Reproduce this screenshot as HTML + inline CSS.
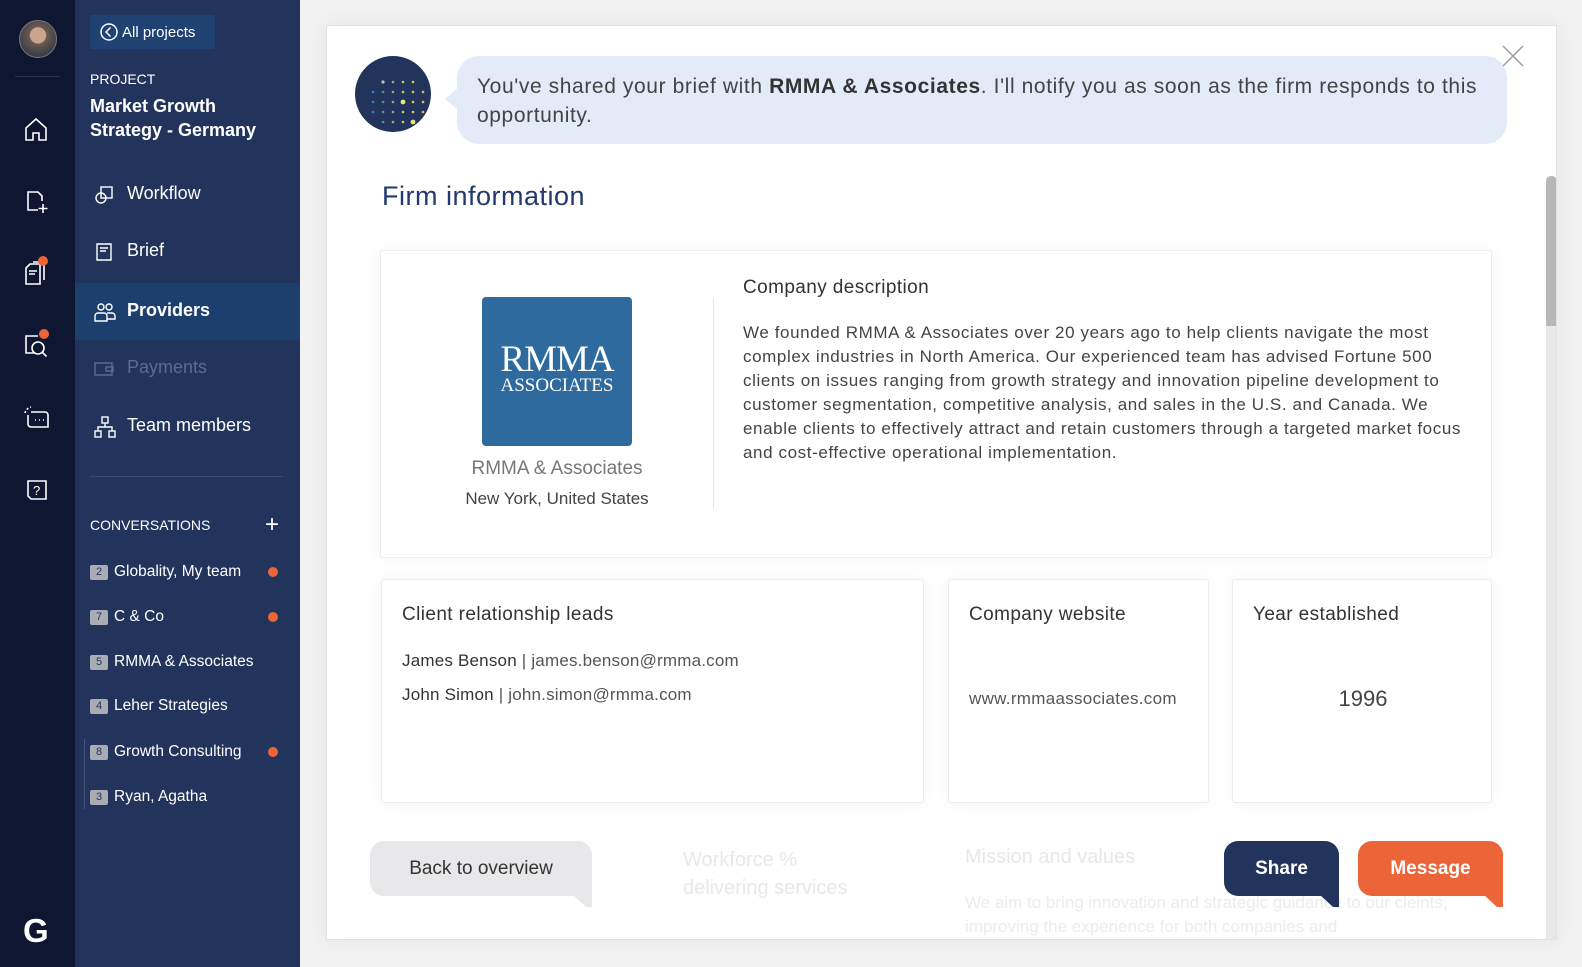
<!DOCTYPE html>
<html><head><meta charset="utf-8"><style>
*{margin:0;padding:0;box-sizing:border-box}
body{width:1582px;height:967px;overflow:hidden;background:#f2f2f2;font-family:"Liberation Sans",sans-serif;position:relative}
.abs{position:absolute}
#rail{left:0;top:0;width:75px;height:967px;background:#0f1631}
#panel{left:75px;top:0;width:225px;height:967px;background:#22335c;color:#fff}
.nav{position:absolute;left:0;width:225px;height:57px;display:flex;align-items:center;font-size:18px;color:#fff}
.nav svg{position:absolute;left:18px}
.nav span{position:absolute;left:52px;top:17px}
.conv{position:absolute;left:15px;font-size:15.5px;color:#fff;display:flex;align-items:center}
.badge{width:18px;height:15px;background:#a9acb5;color:#22335c;font-size:11px;text-align:center;line-height:15px;border-radius:2px;margin-right:6px}
.dot{position:absolute;left:193px;width:10px;height:10px;border-radius:50%;background:#ec6538}
.card{position:absolute;background:#fff;border:1px solid #ececec;border-radius:3px;box-shadow:0 0 18px rgba(0,0,0,0.04)}
.ct{position:absolute;font-size:19px;color:#333;letter-spacing:.4px}
</style></head><body>
<div id="rail" class="abs">
 <div class="abs" style="left:19px;top:20px;width:38px;height:38px;border-radius:50%;background:radial-gradient(circle at 50% 40%,#c9a58e 0 28%,#6d5a52 30%,#3a3f4a 70%);border:1px solid #777"></div>
 <div class="abs" style="left:15px;top:76px;width:45px;height:1px;background:#2a3352"></div>
 <svg class="abs" style="left:24px;top:116px" width="24" height="26" viewBox="0 0 24 26" fill="none" stroke="#fff" stroke-width="1.6"><path d="M2 12L12 3l10 9v12h-7v-7H9v7H2z"/></svg>
 <svg class="abs" style="left:24px;top:189px" width="26" height="26" viewBox="0 0 26 26" fill="none" stroke="#fff" stroke-width="1.6"><path d="M14 21H4V3h10l4 4v5"/><path d="M19 15v9M14.5 19.5h9"/></svg>
 <svg class="abs" style="left:24px;top:258px" width="26" height="28" viewBox="0 0 26 28" fill="none" stroke="#fff" stroke-width="1.6"><path d="M6 6h10v20H2V10z"/><path d="M9 4h11v18"/><path d="M5 13h8M5 16h6"/></svg>
 <div class="abs" style="left:38px;top:256px;width:10px;height:10px;border-radius:50%;background:#ec6538"></div>
 <svg class="abs" style="left:23px;top:331px" width="28" height="30" viewBox="0 0 28 30" fill="none" stroke="#fff" stroke-width="1.6"><path d="M12 22H3V5h12"/><circle cx="15" cy="17" r="6"/><path d="M19.5 21.5l4 4"/></svg>
 <div class="abs" style="left:39px;top:329px;width:10px;height:10px;border-radius:50%;background:#ec6538"></div>
 <svg class="abs" style="left:23px;top:405px" width="28" height="26" viewBox="0 0 28 26" fill="none" stroke="#fff" stroke-width="1.6"><path d="M8 7h14a3 3 0 0 1 3 3v12H8a3 3 0 0 1-3-3v-9"/><path d="M2 8a8 8 0 0 1 6-6" stroke-dasharray="2 2"/><path d="M12 15h1M16 15h1M20 15h1"/></svg>
 <svg class="abs" style="left:25px;top:478px" width="24" height="24" viewBox="0 0 24 24" fill="none" stroke="#fff" stroke-width="1.6"><path d="M3 3h18v18H6l-3-3z"/><text x="8" y="17" font-size="13" fill="#fff" stroke="none" font-family="Liberation Sans">?</text></svg>
 <div class="abs" style="left:23px;top:912px;font-size:33px;font-weight:bold;color:#fff">G</div>
</div>
<div id="panel" class="abs">
 <div class="abs" style="left:15px;top:15px;width:125px;height:34px;background:#1f4272;border-radius:2px;font-size:15px;display:flex;align-items:center">
  <svg style="margin-left:9px;margin-right:3px" width="20" height="20" viewBox="0 0 20 20" fill="none" stroke="#fff" stroke-width="1.5"><circle cx="10" cy="10" r="8"/><path d="M11.5 5.5L7 10l4.5 4.5"/></svg>All projects</div>
 <div class="abs" style="left:15px;top:71px;font-size:14px">PROJECT</div>
 <div class="abs" style="left:15px;top:94px;font-size:18px;font-weight:bold;line-height:24px">Market Growth<br>Strategy - Germany</div>
 <div class="nav" style="top:166px"><svg width="22" height="22" viewBox="0 0 22 22" fill="none" stroke="#fff" stroke-width="1.4"><rect x="8" y="3" width="11" height="11"/><circle cx="8" cy="14" r="5"/></svg><span>Workflow</span></div>
 <div class="nav" style="top:223px"><svg width="22" height="22" viewBox="0 0 22 22" fill="none" stroke="#fff" stroke-width="1.4"><path d="M4 3h14v16H4z"/><path d="M7 7h8M7 10h6"/></svg><span>Brief</span></div>
 <div class="nav" style="top:283px;background:#1d3f6e;font-weight:bold"><svg width="24" height="22" viewBox="0 0 24 22" fill="none" stroke="#fff" stroke-width="1.4"><circle cx="8" cy="6" r="3"/><circle cx="16" cy="6" r="3"/><path d="M2 20v-5a3 3 0 0 1 3-3h6a3 3 0 0 1 3 3v5zM14 12h5a3 3 0 0 1 3 3v3h-8"/></svg><span>Providers</span></div>
 <div class="nav" style="top:340px;color:#5d6b8c"><svg width="22" height="22" viewBox="0 0 22 22" fill="none" stroke="#5d6b8c" stroke-width="1.4"><path d="M2 5h17v12H2z"/><path d="M13 9h7v4h-7z"/></svg><span>Payments</span></div>
 <div class="nav" style="top:398px"><svg width="24" height="24" viewBox="0 0 24 24" fill="none" stroke="#fff" stroke-width="1.4"><rect x="9" y="2" width="6" height="6"/><rect x="2" y="16" width="6" height="6"/><rect x="16" y="16" width="6" height="6"/><path d="M12 8v4M5 16v-4h14v4"/></svg><span>Team members</span></div>
 <div class="abs" style="left:15px;top:476px;width:193px;height:1px;background:#3b4a70"></div>
 <div class="abs" style="left:15px;top:517px;font-size:14px">CONVERSATIONS</div>
 <div class="abs" style="left:190px;top:511px;font-size:24px">+</div>
 <div class="abs" style="left:9px;top:739px;width:1px;height:70px;background:#46557a"></div>
 <div class="conv" style="top:563px"><div class="badge">2</div>Globality, My team</div><div class="dot" style="top:567px"></div>
 <div class="conv" style="top:608px"><div class="badge">7</div>C &amp; Co</div><div class="dot" style="top:612px"></div>
 <div class="conv" style="top:653px"><div class="badge">5</div>RMMA &amp; Associates</div>
 <div class="conv" style="top:697px"><div class="badge">4</div>Leher Strategies</div>
 <div class="conv" style="top:743px"><div class="badge">8</div>Growth Consulting</div><div class="dot" style="top:747px"></div>
 <div class="conv" style="top:788px"><div class="badge">3</div>Ryan, Agatha</div>
</div>
<div class="abs" style="left:326px;top:25px;width:1231px;height:915px;background:#fff;border:1px solid #e2e2e2;box-shadow:0 0 20px rgba(0,0,0,0.06);overflow:hidden">
 <svg class="abs" style="left:28px;top:30px" width="76" height="76" viewBox="0 0 76 76"><circle cx="38" cy="38" r="38" fill="#22335c"/>
  <g fill="#7fb56b"><circle cx="28" cy="26" r="1.6" fill="#9fd0c0"/><circle cx="38" cy="26" r="1.3"/><circle cx="48" cy="26" r="1.3" fill="#b9d27a"/><circle cx="58" cy="26" r="1.3" fill="#e0c84f"/>
  <circle cx="18" cy="36" r="1.3" fill="#3d7ab8"/><circle cx="28" cy="36" r="1.3" fill="#4a9a8a"/><circle cx="38" cy="36" r="1.3"/><circle cx="48" cy="36" r="1.3" fill="#b9d27a"/><circle cx="58" cy="36" r="1.3" fill="#e0c84f"/><circle cx="68" cy="36" r="1.3" fill="#e8b84a"/>
  <circle cx="18" cy="46" r="1.3" fill="#3d7ab8"/><circle cx="28" cy="46" r="1.3" fill="#4a9a8a"/><circle cx="38" cy="46" r="1.3"/><circle cx="48" cy="46" r="2.4" fill="#d8f07a"/><circle cx="58" cy="46" r="1.3" fill="#e0c84f"/><circle cx="68" cy="46" r="1.3" fill="#e8b84a"/>
  <circle cx="18" cy="56" r="1.3" fill="#3d7ab8"/><circle cx="28" cy="56" r="1.3" fill="#4a9a8a"/><circle cx="38" cy="56" r="1.3"/><circle cx="48" cy="56" r="1.3" fill="#b9d27a"/><circle cx="58" cy="56" r="1.3" fill="#e0c84f"/><circle cx="68" cy="56" r="1.3" fill="#e8b84a"/>
  <circle cx="28" cy="66" r="1.3" fill="#4a9a8a"/><circle cx="38" cy="66" r="1.3"/><circle cx="48" cy="66" r="1.3" fill="#b9d27a"/><circle cx="58" cy="66" r="2.4" fill="#f0e47a"/></g></svg>
 <div class="abs" style="left:130px;top:30px;width:1050px;height:88px;background:#e3eaf8;border-radius:22px"></div>
 <div class="abs" style="left:118px;top:61px;width:0;height:0;border-top:12px solid transparent;border-bottom:12px solid transparent;border-right:14px solid #e3eaf8"></div>
 <div class="abs" style="left:150px;top:46px;width:1010px;font-size:21px;line-height:29px;color:#444;letter-spacing:.6px">You've shared your brief with <b style="color:#333">RMMA &amp; Associates</b>. I'll notify you as soon as the firm responds to this opportunity.</div>
 <svg class="abs" style="left:1175px;top:19px" width="22" height="22" viewBox="0 0 22 22" stroke="#999" stroke-width="1.4"><path d="M1 1l20 20M21 1L1 21"/></svg>
 <div class="abs" style="left:1219px;top:150px;width:11px;height:153px;background:#b7b7b7;border-radius:5px"></div>
 <div class="abs" style="left:1219px;top:300px;width:11px;height:615px;background:#e8e8e8"></div>
 <div class="abs" style="left:55px;top:155px;font-size:27px;color:#223a6b;letter-spacing:.5px">Firm information</div>
 <div class="card" style="left:53px;top:224px;width:1112px;height:308px">
  <div class="abs" style="left:101px;top:46px;width:150px;height:149px;background:#2e6a9e;border-radius:4px;color:#fff;font-family:'Liberation Serif',serif;text-align:center">
   <div style="margin-top:46px;font-size:37px;line-height:34px;letter-spacing:-1px">RMMA</div><div style="font-size:19px;line-height:18px">ASSOCIATES</div></div>
  <div class="abs" style="left:26px;top:207px;width:300px;text-align:center;font-size:19px;color:#777">RMMA &amp; Associates</div>
  <div class="abs" style="left:26px;top:238px;width:300px;text-align:center;font-size:17px;color:#444">New York, United States</div>
  <div class="abs" style="left:332px;top:46px;width:1px;height:212px;background:#e6e6e6"></div>
  <div class="ct" style="left:362px;top:26px">Company description</div>
  <div class="abs" style="left:362px;top:70px;font-size:17px;line-height:24px;color:#444;letter-spacing:.6px;white-space:nowrap">We founded RMMA &amp; Associates over 20 years ago to help clients navigate the most<br>complex industries in North America. Our experienced team has advised Fortune 500<br>clients on issues ranging from growth strategy and innovation pipeline development to<br>customer segmentation, competitive analysis, and sales in the U.S. and Canada. We<br>enable clients to effectively attract and retain customers through a targeted market focus<br>and cost-effective operational implementation.</div>
 </div>
 <div class="card" style="left:54px;top:553px;width:543px;height:224px">
  <div class="ct" style="left:20px;top:24px">Client relationship leads</div>
  <div class="abs" style="left:20px;top:64px;font-size:17px;color:#555;line-height:34px;letter-spacing:.2px"><span style="color:#333">James Benson</span> | james.benson@rmma.com<br><span style="color:#333">John Simon</span> | john.simon@rmma.com</div>
 </div>
 <div class="card" style="left:621px;top:553px;width:261px;height:224px">
  <div class="ct" style="left:20px;top:24px">Company website</div>
  <div class="abs" style="left:20px;top:109px;font-size:17px;color:#555;letter-spacing:.3px">www.rmmaassociates.com</div>
 </div>
 <div class="card" style="left:905px;top:553px;width:260px;height:224px">
  <div class="ct" style="left:20px;top:24px">Year established</div>
  <div class="abs" style="left:0;width:260px;text-align:center;top:106px;font-size:22px;color:#444">1996</div>
 </div>
 <div class="abs" style="left:54px;top:795px;width:1111px;height:130px;background:#fff;opacity:.9"></div>
 <div class="abs" style="left:356px;top:820px;font-size:20px;line-height:28px;color:#e8e8e8">Workforce %<br>delivering services</div>
 <div class="abs" style="left:638px;top:820px;font-size:20px;color:#e8e8e8">Mission and values</div>
 <div class="abs" style="left:638px;top:865px;font-size:17px;line-height:24px;color:#ececec;width:500px">We aim to bring innovation and strategic guidance to our cleints, improving the experience for both companies and</div>
 <div class="abs" style="left:43px;top:815px;width:222px;height:55px;background:#e8e8ea;border-radius:14px 14px 0 14px;font-size:19px;color:#333;text-align:center;line-height:55px">Back to overview</div>
 <div class="abs" style="left:245px;top:868px;width:20px;height:13px;background:#e8e8ea;clip-path:polygon(0 0,100% 0,100% 100%,70% 100%)"></div>
 <div class="abs" style="left:897px;top:815px;width:115px;height:55px;background:#22335c;border-radius:14px 14px 0 14px;font-size:19px;font-weight:bold;color:#fff;text-align:center;line-height:55px">Share</div>
 <div class="abs" style="left:992px;top:868px;width:20px;height:13px;background:#22335c;clip-path:polygon(0 0,100% 0,100% 100%,70% 100%)"></div>
 <div class="abs" style="left:1031px;top:815px;width:145px;height:55px;background:#ec6538;border-radius:14px 14px 0 14px;font-size:19px;font-weight:bold;color:#fff;text-align:center;line-height:55px">Message</div>
 <div class="abs" style="left:1156px;top:868px;width:20px;height:13px;background:#ec6538;clip-path:polygon(0 0,100% 0,100% 100%,70% 100%)"></div>
</div>
</body></html>
